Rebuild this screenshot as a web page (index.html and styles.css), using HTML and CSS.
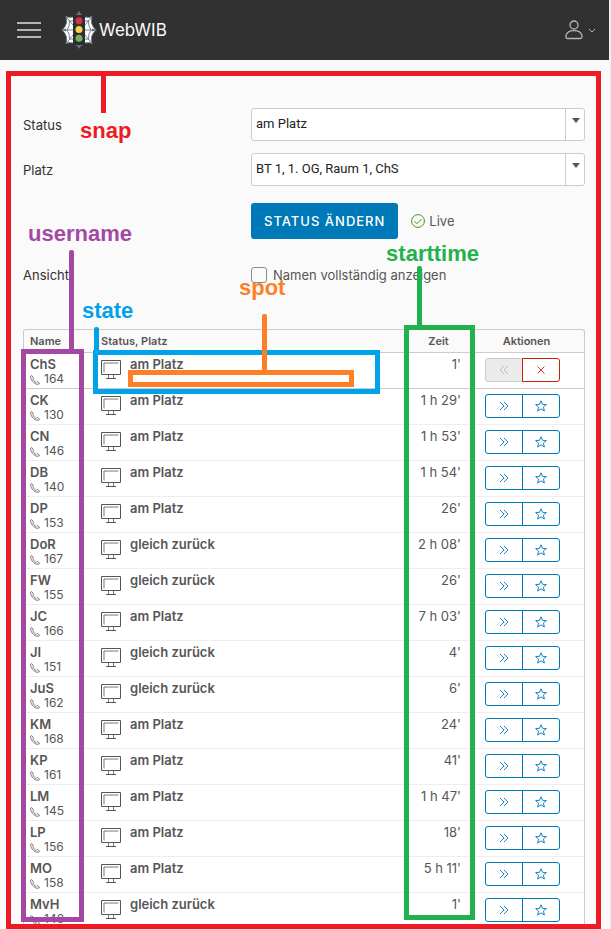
FILE: index.html
```html
<!DOCTYPE html>
<html lang="de">
<head>
<meta charset="utf-8">
<meta name="viewport" content="width=device-width, initial-scale=1">
<title>WebWIB</title>
<link rel="stylesheet" href="styles.css">
</head>
<body>
<svg class="sprite" aria-hidden="true">
  <symbol id="phone" viewBox="0 0 10 10"><path d="M.7 1.2C.2 3.2 1.8 6 3.600 7.500 5.500 9.200 7.700 9.800 9.200 8.800Q9.800 8.200 9.200 7.700L7.700 6.700Q7.100 6.400 6.700 6.900L6.200 7.400C5 6.800 3.400 5.200 2.800 4L3.200 3.500Q3.500 3.100 3.200 2.600L2.200 1Q1.400.2.700 1.200Z"/></symbol>
  <symbol id="monitor" viewBox="0 0 20 20"><path d="M.5.5H19.500V14.500H.500Z"/><path class="thin" d="M3 12.500V3H17.500M7.500 14.500V18M12.500 14.500V18"/><path d="M5 18.500H15"/></symbol>
  <symbol id="next" viewBox="0 0 10 10"><path d="M1 1 5 5 1 9M5 1 9 5 5 9"/></symbol>
  <symbol id="prev" viewBox="0 0 10 10"><path d="M5 1 1 5 5 9M9 1 5 5 9 9"/></symbol>
  <symbol id="close" viewBox="0 0 10 10"><path d="M1.500 1.500 8.500 8.500M8.500 1.500 1.500 8.500"/></symbol>
  <symbol id="star" viewBox="0 0 12 12"><path d="M6 .8 7.500 4.300 11.400 4.600 8.400 7.100 9.400 11 6 8.900 2.600 11 3.600 7.100.600 4.600 4.500 4.300Z"/></symbol>
</svg>
<div class="page">
  <header class="topbar">
    <button class="menu" aria-label="Menü"><span></span><span></span><span></span></button>
    <a class="brand" href="#">
      <svg class="logo" viewBox="0 0 36 38" aria-hidden="true">
        <path class="web" d="M12 6Q8 7 5 5.500 6 9 5.500 12 4.500 16 1 19 4.500 22 5.500 26 6 29 5 32.500 8 31 12 32ZM24 6Q28 7 31 5.500 30 9 30.500 12 31.500 16 35 19 31.500 22 30.500 26 30 29 31 32.500 28 31 24 32Z"/>
        <path class="spike" d="M14 4Q17 3 18 0 19 3 22 4ZM14 34Q17 35 18 38 19 35 22 34ZM0 19 5 17.500V20.500ZM36 19 31 17.500V20.500Z"/>
        <path class="thread" d="M12 6Q8 7 5 5.500 6 9 5.500 12 4.500 16 1 19 4.500 22 5.500 26 6 29 5 32.500 8 31 12 32M24 6Q28 7 31 5.500 30 9 30.500 12 31.500 16 35 19 31.500 22 30.500 26 30 29 31 32.500 28 31 24 32M12 10Q9 10 8.500 9.500 9 15 6 19 9 23 8.500 28.500 9 28 12 28M24 10Q27 10 27.500 9.500 27 15 30 19 27 23 27.500 28.500 27 28 24 28M1 19H12M24 19H35M5 5.500 12 14M31 5.500 24 14M5 32.500 12 24M31 32.500 24 24"/>
        <rect class="housing" x="12" y="4" width="12" height="30" rx="2"/>
        <circle class="stop" cx="18" cy="9.700" r="3.500"/><circle class="wait" cx="18" cy="18.500" r="3.500"/><circle class="go" cx="18" cy="27.300" r="3.500"/>
      </svg>
      <span>WebWIB</span>
    </a>
    <button class="account" aria-label="Benutzer">
      <svg class="person" viewBox="0 0 18 20" aria-hidden="true"><circle cx="9" cy="5" r="4"/><path d="M1 17V15.500C2 12 5 10.700 9 10.700S16 12 17 15.500V17Q17 18.500 15.500 18.500H2.500Q1 18.500 1 17Z"/></svg>
      <svg class="chevron" viewBox="0 0 8 5" aria-hidden="true"><path d="M1 1 4 4 7 1"/></svg>
    </button>
  </header>
  <main>
    <form class="settings">
      <div class="field"><label for="status">Status</label><div class="picker"><select id="status"><option>am Platz</option><option>gleich zurück</option></select></div></div>
      <div class="field"><label for="spot">Platz</label><div class="picker"><select id="spot"><option>BT 1, 1. OG, Raum 1, ChS</option></select></div></div>
      <div class="field submit"><span></span><div class="line"><button type="button" class="primary">STATUS ÄNDERN</button><span class="live"><svg viewBox="0 0 14 14" aria-hidden="true"><circle cx="7" cy="7" r="6.400"/><path d="M3.500 7.200 6 9.700 10.600 5"/></svg>Live</span></div></div>
      <div class="field"><span>Ansicht</span><label class="check"><input type="checkbox">Namen vollständig anzeigen</label></div>
    </form>
    <table>
      <thead><tr><th class="name">Name</th><th class="state">Status, Platz</th><th class="time">Zeit</th><th class="actions">Aktionen</th></tr></thead>
      <tbody id="people"></tbody>
    </table>
    <div class="mark frame snap"></div><div class="mark stem snap"></div><span class="mark tag snap">snap</span>
    <div class="mark frame user"></div><div class="mark stem user"></div><span class="mark tag user">username</span>
    <div class="mark frame status"></div><div class="mark stem status"></div><span class="mark tag status">state</span>
    <div class="mark frame place"></div><div class="mark stem place"></div><span class="mark tag place">spot</span>
    <div class="mark frame start"></div><div class="mark stem start"></div><span class="mark tag start">starttime</span>
  </main>
</div>
<script src="app.js"></script>
</body>
</html>
```
FILE: styles.css
```css
* { box-sizing: border-box; }
body { margin: 0; background: #f0f0f0; font: 13px/16px Inter, "Liberation Sans", sans-serif; color: #565656; }
button, input, select { font: inherit; margin: 0; }
svg { fill: none; stroke: currentColor; display: block; flex: none; }
.sprite { display: none; }
.page { margin-right: 2px; background: #fafafa; overflow: hidden; }

.topbar { display: flex; align-items: center; height: 60px; padding: 0 13px 0 17px; background: #313131; color: #b4b4b4; }
.menu, .account { border: 0; padding: 0; background: none; color: inherit; }
.menu { display: flex; flex-direction: column; gap: 5px; width: 24px; }
.menu span { height: 2px; background: #b4b4b4; }
.brand { display: flex; align-items: center; gap: 2px; margin-left: 20px; color: #fafafa; font-size: 17px; text-decoration: none; }
.logo { width: 36px; height: 38px; }
.web { fill: #fff; stroke: none; }
.thread { stroke: #66757f; stroke-width: .9; }
.spike { fill: #66757f; stroke: none; }
.housing { fill: #292f33; stroke: none; }
.stop { fill: #dd2e44; stroke: none; }
.wait { fill: #ffcc4d; stroke: none; }
.go { fill: #77b255; stroke: none; }
.account { display: flex; align-items: center; gap: 5px; margin-left: auto; }
.person { width: 18px; height: 20px; stroke-width: 1.3; }
.chevron { width: 8px; height: 5px; }

main { position: relative; padding: 48px 24px 0 23px; }
.settings { display: flex; flex-direction: column; gap: 12px; margin-bottom: 46px; }
.field { display: grid; grid-template-columns: 228px 1fr; align-items: center; color: #313131; }
.submit { margin: 5px 0 16px; }
.picker { position: relative; display: flex; }
.picker select { width: 100%; height: 33px; padding: 0 28px 2px 4px; appearance: none; border: 1px solid #ccc; border-radius: 3px; background: #fff; color: #222; font-family: Roboto, sans-serif; }
.picker::before { content: ""; position: absolute; top: 1px; bottom: 1px; right: 19px; border-left: 1px solid #ccc; }
.picker::after { content: ""; position: absolute; top: 10px; right: 5px; border: 4px solid transparent; border-top: 5px solid #565656; border-bottom: 0; }
.line { display: flex; align-items: center; gap: 13px; }
.primary { height: 36px; padding: 0 13px; border: 0; border-radius: 3px; background: #0079b8; color: #fff; font-weight: 500; letter-spacing: 1px; white-space: nowrap; }
.live { display: flex; align-items: center; gap: 4px; color: #565656; }
.live svg { width: 14px; height: 14px; color: #48960c; }
.check { display: flex; align-items: center; gap: 6px; color: #565656; }
.check input { appearance: none; width: 16px; height: 16px; border: 1px solid #8c8c8c; border-radius: 3px; }

table { width: 100%; table-layout: fixed; border: 1px solid #ccc; border-bottom: 0; border-radius: 3px 3px 0 0; border-spacing: 0; }
th { height: 23px; padding: 0; border-bottom: 1px solid #ccc; font-size: 11px; font-weight: 600; text-align: center; }
td { height: 36px; padding: 3px 0 0; border-bottom: 1px solid #eee; background: #fff; vertical-align: top; }
tr:first-child td { border-bottom-color: #ccc; }
.name { width: 70px; padding-left: 6px; text-align: left; }
.state { padding-left: 7px; text-align: left; }
.time { width: 61px; }
td.time { padding-right: 8px; text-align: right; white-space: nowrap; }
.actions { width: 115px; }
td.actions { padding-left: 16px; }
.name b, .state b { font-weight: 600; }
.person-cell { display: flex; flex-direction: column; height: 30px; }
.person-cell b { line-height: 16px; }
.extension { display: flex; align-items: center; gap: 4px; font-size: 12px; line-height: 12px; }
.extension svg { width: 10px; height: 10px; margin-top: 3px; stroke-width: .8; }
.state-cell { display: flex; gap: 9px; }
.state-cell svg { width: 20px; height: 20px; margin-top: 4px; }
.thin { stroke-width: .8; }
.group { display: flex; width: 75px; padding-top: 2px; }
.group button { display: grid; place-items: center; width: 38px; height: 24px; padding: 0; border: 1px solid #0079b8; background: #fff; color: #0079b8; border-radius: 3px 0 0 3px; }
.group button + button { margin-left: -1px; border-radius: 0 3px 3px 0; }
.group svg { width: 10px; height: 10px; stroke-width: .9; }
.group svg.star { width: 12px; height: 12px; }
.group button:disabled { border-color: #ccc; background: #ebebeb; color: #b4b4b4; }
.group button.remove { border-color: #c92100; color: #e12200; }

.mark { position: absolute; pointer-events: none; }
.snap { --ink: #ed1c24; }
.user { --ink: #a349a4; }
.status { --ink: #00a2e8; }
.place { --ink: #ff7f27; }
.start { --ink: #22b14c; }
.frame { border: 5px solid var(--ink); }
.stem { width: 5px; background: var(--ink); border-radius: 2px 2px 0 0; }
.tag { color: var(--ink); font: bold 22px/24px "Liberation Sans", sans-serif; }
.frame.snap { inset: 11px 8px 0 6px; }
.stem.snap { left: 101px; top: 13px; height: 40px; }
.tag.snap { left: 80px; top: 59px; }
.frame.user { left: 21px; top: 289px; bottom: 7px; width: 63px; }
.stem.user { left: 69px; top: 190px; height: 102px; }
.tag.user { left: 28px; top: 162px; }
.frame.status { left: 93px; top: 290px; width: 287px; height: 44px; }
.stem.status { left: 94px; top: 267px; height: 26px; }
.tag.status { left: 82px; top: 239px; }
.frame.place { left: 128px; top: 310px; width: 226px; height: 17px; }
.stem.place { left: 262px; top: 254px; height: 58px; }
.tag.place { left: 239px; top: 216px; }
.frame.start { right: 134px; top: 265px; bottom: 9px; width: 71px; }
.stem.start { right: 187px; top: 206px; height: 62px; }
.tag.start { right: 130px; top: 182px; }
```
FILE: app.js
```js
const people = [
  ["ChS", 164, "am Platz", "1'"],
  ["CK", 130, "am Platz", "1 h 29'"],
  ["CN", 146, "am Platz", "1 h 53'"],
  ["DB", 140, "am Platz", "1 h 54'"],
  ["DP", 153, "am Platz", "26'"],
  ["DoR", 167, "gleich zurück", "2 h 08'"],
  ["FW", 155, "gleich zurück", "26'"],
  ["JC", 166, "am Platz", "7 h 03'"],
  ["JI", 151, "gleich zurück", "4'"],
  ["JuS", 162, "gleich zurück", "6'"],
  ["KM", 168, "am Platz", "24'"],
  ["KP", 161, "am Platz", "41'"],
  ["LM", 145, "am Platz", "1 h 47'"],
  ["LP", 156, "am Platz", "18'"],
  ["MO", 158, "am Platz", "5 h 11'"],
  ["MvH", 148, "gleich zurück", "1'"]
];

const icon = (name) => `<svg class="${name}" aria-hidden="true"><use href="#${name}"/></svg>`;

const ownActions = `<button disabled aria-label="Zurück">${icon("prev")}</button><button class="remove" aria-label="Entfernen">${icon("close")}</button>`;
const otherActions = `<button aria-label="Weiter">${icon("next")}</button><button aria-label="Favorit">${icon("star")}</button>`;

document.getElementById("people").innerHTML = people.map(([name, extension, state, time], i) => `
  <tr>
    <td class="name"><div class="person-cell"><b>${name}</b><span class="extension">${icon("phone")}${extension}</span></div></td>
    <td class="state"><div class="state-cell">${icon("monitor")}<b>${state}</b></div></td>
    <td class="time">${time}</td>
    <td class="actions"><div class="group">${i === 0 ? ownActions : otherActions}</div></td>
  </tr>`).join("");
```
